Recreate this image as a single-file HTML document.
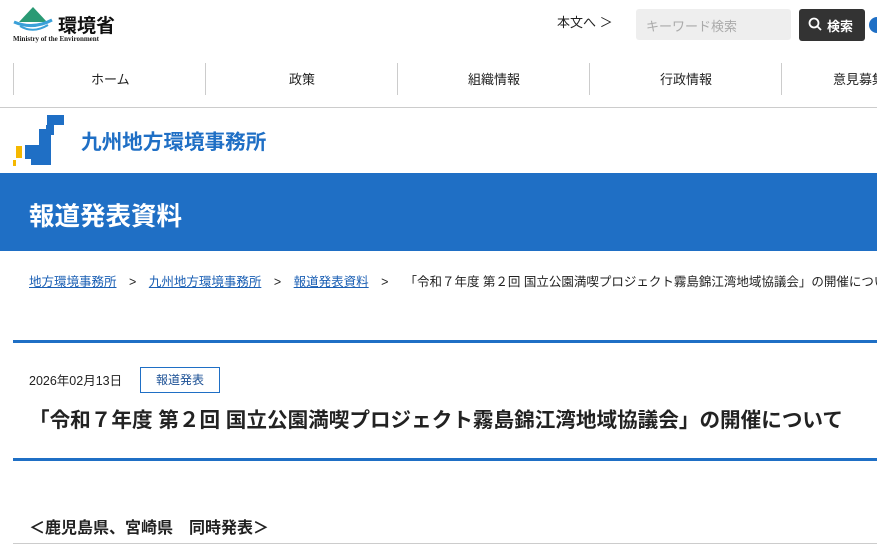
<!DOCTYPE html>
<html><head><meta charset="utf-8"><style>
*{margin:0;padding:0;box-sizing:border-box}
html,body{width:877px;height:555px;overflow:hidden}
body{background:#fff;font-family:"Liberation Sans","Noto Sans CJK JP",sans-serif;color:#222;position:relative}
.a{position:absolute;white-space:nowrap}
a{color:#1a5fb4}
</style></head><body>
<svg class="a" style="left:12px;top:6px" width="42" height="30" viewBox="0 0 42 30"><polygon points="21,1 35,16 7,16" fill="#2a9a74"/><path d="M2 16 Q21 24 40 14" stroke="#3aa0d8" stroke-width="3" fill="none"/><path d="M8 20 Q21 28 36 19" stroke="#3aa0d8" stroke-width="2" fill="none"/></svg>
<div class="a" style="left:58px;top:11px;font-size:19px;font-weight:bold;color:#111">環境省</div>
<div class="a" style="left:13px;top:35px;font-size:7px;font-family:'Liberation Serif',serif;font-weight:bold">Ministry of the Environment</div>
<div class="a" style="left:557px;top:12px;font-size:13px">本文へ ＞</div>
<div class="a" style="left:636px;top:9px;width:155px;height:31px;background:#eee;border-radius:3px;font-size:13px;color:#aaa;padding:7px 10px">キーワード検索</div>
<div class="a" style="left:799px;top:9px;width:66px;height:32px;background:#333;border-radius:3px;color:#fff;font-size:13px;font-weight:bold;padding:7px 0 0 28px">検索</div>
<svg class="a" style="left:808px;top:17px" width="14" height="14"><circle cx="6" cy="6" r="4.5" stroke="#fff" stroke-width="1.8" fill="none"/><path d="M9 9l4 4" stroke="#fff" stroke-width="1.8"/></svg>
<div class="a" style="left:869px;top:17px;width:8px;height:16px;border-radius:8px 0 0 8px;background:#1f6fc5"></div>
<div class="a" style="left:13px;top:63px;height:32px;border-left:1px solid #ccc"></div>
<div class="a" style="left:205px;top:63px;height:32px;border-left:1px solid #ccc"></div>
<div class="a" style="left:397px;top:63px;height:32px;border-left:1px solid #ccc"></div>
<div class="a" style="left:589px;top:63px;height:32px;border-left:1px solid #ccc"></div>
<div class="a" style="left:781px;top:63px;height:32px;border-left:1px solid #ccc"></div>
<div class="a" style="left:91px;top:69px;font-size:13px">ホーム</div>
<div class="a" style="left:289px;top:69px;font-size:13px">政策</div>
<div class="a" style="left:468px;top:69px;font-size:13px">組織情報</div>
<div class="a" style="left:660px;top:69px;font-size:13px">行政情報</div>
<div class="a" style="left:833px;top:69px;font-size:13px;width:44px;overflow:hidden">意見募集</div>
<div class="a" style="left:0;top:107px;width:877px;border-top:1px solid #ccc"></div>
<svg class="a" style="left:13px;top:113px" width="52" height="54"><path d="M34 2h17v10h-17z" fill="#1f6fc5"/><path d="M33 12h8v10h-8z" fill="#1f6fc5"/><path d="M26 16h12v36h-12z" fill="#1f6fc5"/><path d="M12 32h16v14h-16z" fill="#1f6fc5"/><path d="M18 46h12v6h-12z" fill="#1f6fc5"/><path d="M3 33h6v12h-6z" fill="#f5b800"/><path d="M0 47h3v6h-3z" fill="#f5b800"/></svg>
<div class="a" style="left:81px;top:125px;font-size:20.6px;color:#1f6fc5;font-weight:bold">九州地方環境事務所</div>
<div class="a" style="left:0;top:173px;width:877px;height:78px;background:#1f6fc5"></div>
<div class="a" style="left:29px;top:196px;font-size:25.5px;color:#fff;font-weight:bold">報道発表資料</div>
<div class="a" style="left:29px;top:271px;font-size:12.5px;width:848px;overflow:hidden"><a href="#">地方環境事務所</a>　&gt;　<a href="#">九州地方環境事務所</a>　&gt;　<a href="#">報道発表資料</a>　&gt;　 「令和７年度 第２回 国立公園満喫プロジェクト霧島錦江湾地域協議会」の開催について</div>
<div class="a" style="left:13px;top:340px;width:864px;height:3px;background:#1f6fc5"></div>
<div class="a" style="left:29px;top:370px;font-size:12.5px">2026年02月13日</div>
<div class="a" style="left:140px;top:367px;width:80px;height:26px;border:1px solid #1f6fc5;font-size:12px;color:#1a4f94;text-align:center;line-height:24px">報道発表</div>
<div class="a" style="left:29px;top:403px;font-size:20.6px;font-weight:bold;color:#222">「令和７年度 第２回 国立公園満喫プロジェクト霧島錦江湾地域協議会」の開催について</div>
<div class="a" style="left:13px;top:458px;width:864px;height:3px;background:#1f6fc5"></div>
<div class="a" style="left:29px;top:514px;font-size:16px;font-weight:bold">＜鹿児島県、宮崎県　同時発表＞</div>
<div class="a" style="left:13px;top:543px;width:864px;border-top:1px solid #ccc"></div>
</body></html>
